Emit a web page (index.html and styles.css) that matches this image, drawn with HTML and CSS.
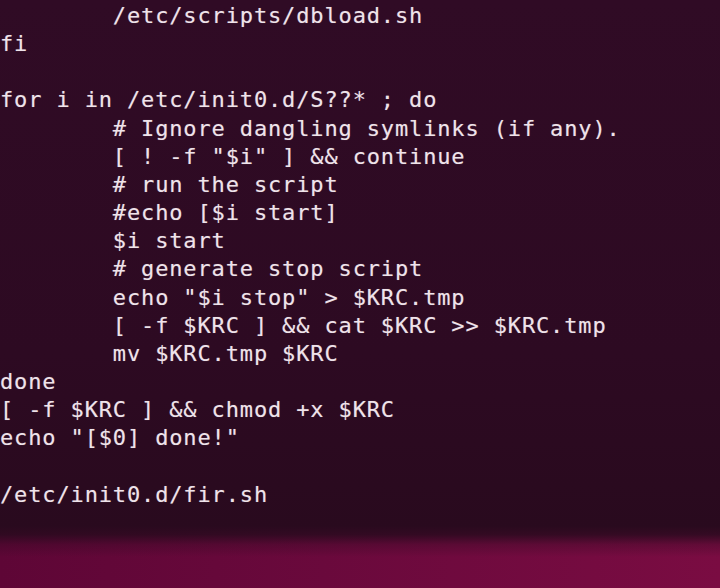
FILE: index.html
```html
<!DOCTYPE html>
<html lang="en">
<head>
<meta charset="utf-8">
<title>Terminal</title>
<link rel="stylesheet" href="styles.css">
</head>
<body>
<div class="screen">
<pre class="code">        /etc/scripts/dbload.sh
fi

for i in /etc/init0.d/S??* ; do
        # Ignore dangling symlinks (if any).
        [ ! -f "$i" ] &amp;&amp; continue
        # run the script
        #echo [$i start]
        $i start
        # generate stop script
        echo "$i stop" &gt; $KRC.tmp
        [ -f $KRC ] &amp;&amp; cat $KRC &gt;&gt; $KRC.tmp
        mv $KRC.tmp $KRC
done
[ -f $KRC ] &amp;&amp; chmod +x $KRC
echo "[$0] done!"

/etc/init0.d/fir.sh</pre>
<div class="band"></div>
</div>
</body>
</html>
```

FILE: styles.css
```css
html, body {
  margin: 0;
  padding: 0;
  width: 720px;
  height: 588px;
  overflow: hidden;
  background: #2e0a23;
}

.screen {
  display: flex;
  flex-direction: column;
  width: 720px;
  height: 588px;
  background: linear-gradient(180deg, #300b25 0%, #2d0a22 60%, #290a1e 90%);
}

.code {
  flex: 1;
  margin: 0;
  padding: 2px 0 0 0;
  font-family: "DejaVu Sans Mono", "Liberation Mono", monospace;
  font-size: 22px;
  letter-spacing: 0.86px;
  line-height: 28.15px;
  color: #efe3ea;
  white-space: pre;
  text-shadow: 0 0 1px rgba(240, 225, 235, 0.35);
}

.band {
  height: 62px;
  flex: none;
  background:
    linear-gradient(180deg, rgba(41, 10, 30, 1) 0%, rgba(41, 10, 30, 0.85) 14%, rgba(41, 10, 30, 0.3) 30%, rgba(41, 10, 30, 0) 50%),
    linear-gradient(90deg, #5e0636 0%, #6a093c 45%, #7a0c42 100%);
}
```
